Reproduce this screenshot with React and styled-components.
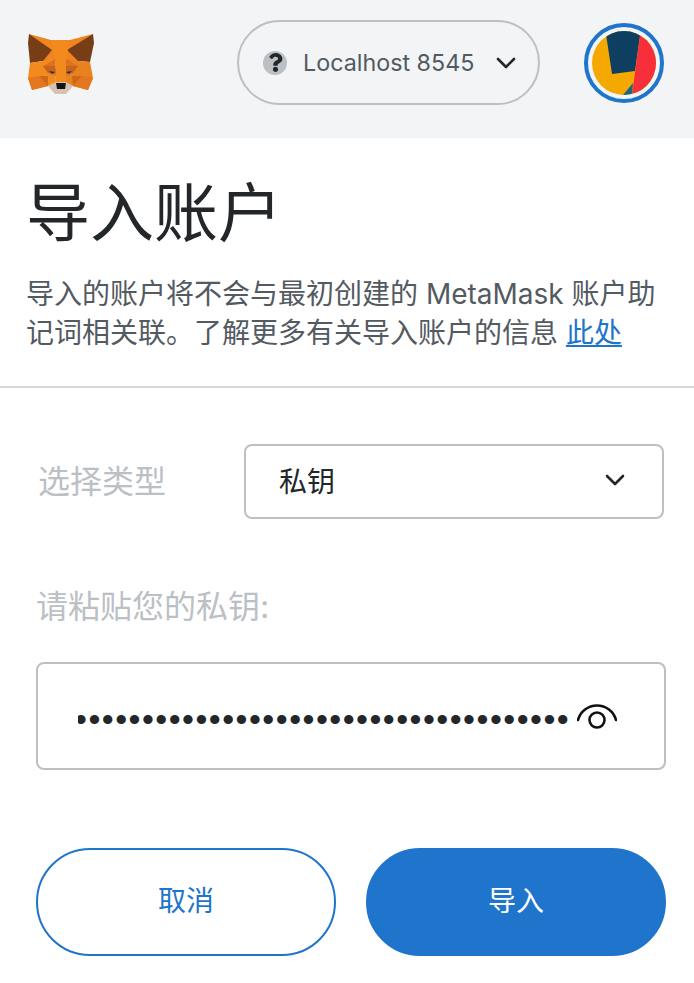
import React from 'react';
import styled, { createGlobalStyle } from 'styled-components';
import { FaQuestion } from 'react-icons/fa';

const Global = createGlobalStyle`
  html, body { margin: 0; padding: 0; background: #fff; }
  body { font-family: "Inter", "Noto Sans CJK SC", sans-serif; color: #24272a; }
  * { box-sizing: border-box; }
`;

const Page = styled.div`
  width: 694px;
  height: 983px;
  background: #fff;
  overflow: hidden;
`;

const Header = styled.header`
  height: 138px;
  background: #f2f4f6;
  display: flex;
  align-items: center;
  padding: 0 30px 13px 27px;
`;

const Pill = styled.div`
  width: 303px;
  height: 85px;
  margin: 0 44px 0 auto;
  border: 2px solid #bbc0c5;
  border-radius: 43px;
  display: flex;
  align-items: center;
  padding: 0 21px 0 24px;
`;

const HelpDot = styled.span`
  width: 24px;
  height: 24px;
  border-radius: 50%;
  background: #bbc0c5;
  display: flex;
  align-items: center;
  justify-content: center;
  color: #24272a;
  font-size: 19px;
  flex: none;
`;

const NetName = styled.span`
  margin-left: 16px;
  flex: 1;
  font-size: 23.3px;
  color: #535a61;
  white-space: nowrap;
`;

const AvatarRing = styled.div`
  width: 80px;
  height: 80px;
  border: 4px solid #1f74cb;
  border-radius: 50%;
  padding: 4px;
`;

const Intro = styled.section`
  padding: 0 26px;
  height: 250px;
  border-bottom: 2px solid #d6d9dc;
`;

const Title = styled.h1`
  margin: 0;
  padding-top: 34px;
  font-size: 64px;
  line-height: 82px;
  font-weight: 400;
  color: #24272a;
`;

const Desc = styled.p`
  margin: 21px 0 0;
  font-size: 28px;
  line-height: 39px;
  color: #535a61;
`;

const Link = styled.a`
  color: #1f74cb;
  text-decoration: underline;
`;

const Form = styled.section`
  padding: 0 28px 0 36px;
`;

const TypeRow = styled.div`
  display: flex;
  align-items: center;
  justify-content: space-between;
  padding: 56px 2px 0 2px;
`;

const Label = styled.label`
  font-size: 32px;
  line-height: 44px;
  color: #bbc0c5;
`;

const SelectBox = styled.div`
  width: 420px;
  height: 75px;
  border: 2px solid #bbc0c5;
  border-radius: 8px;
  display: flex;
  align-items: center;
  justify-content: space-between;
  padding: 0 36px 4px 33px;
  font-size: 28px;
  color: #24272a;
`;

const KeyLabel = styled(Label)`
  display: block;
  margin-top: 66px;
`;

const KeyField = styled.div`
  margin-top: 33px;
  width: 630px;
  height: 108px;
  border: 2px solid #bbc0c5;
  border-radius: 8px;
  display: flex;
  align-items: center;
  padding: 0 46px 0 40px;
`;

const KeyDots = styled.span`
  flex: none;
  width: 492px;
  margin: 6px 7px 0 0;
  overflow: hidden;
  white-space: nowrap;
  font-family: "Liberation Sans", sans-serif;
  font-size: 34px;
  line-height: 40px;
  letter-spacing: 1.48px;
  text-indent: -3px;
  color: #24272a;
`;

const Actions = styled.div`
  margin-top: 78px;
  width: 630px;
  display: flex;
  gap: 30px;
`;

const Button = styled.button`
  flex: 1;
  height: 108px;
  padding: 0 0 6px;
  border-radius: 54px;
  border: 2px solid #1f74cb;
  background: ${p => (p.$primary ? '#1f74cb' : '#fff')};
  color: ${p => (p.$primary ? '#fff' : '#1f74cb')};
  font: inherit;
  font-size: 28px;
`;

const Chevron = ({ size = 22 }) => (
  <svg width={size} height={size} viewBox="0 0 22 22" fill="none" stroke="#24272a" strokeWidth="2.6" strokeLinecap="round" strokeLinejoin="round">
    <path d="M3 7l8 8 8-8" />
  </svg>
);

const Fox = () => (
  <svg width="68" height="62" viewBox="27 31 68 62">
    <polygon points="29,33 51,39 70,39 93,33 78,60 43,60" fill="#f0851f" />
    <polygon points="29,33 52,49 43,60 30,62 28,42" fill="#763d16" />
    <polygon points="93,33 67,49 78,60 90,61 94,42" fill="#763d16" />
    <polygon points="51,39 70,39 66,58 66,82 56,82 55,58" fill="#f28a1e" />
    <polygon points="30,62 43,60 55,58 56,82 48,85 32,89 28,77" fill="#f28a1e" />
    <polygon points="90,61 78,60 66,58 66,82 73,85 88,89 93,77" fill="#e8821e" />
    <polygon points="43,65 55,58 56,75 48,72" fill="#dd7320" />
    <polygon points="78,65 66,58 66,75 73,72" fill="#dd7320" />
    <polygon points="43,65 55,65 56,72 48,72" fill="#c9621c" />
    <polygon points="78,65 66,65 66,72 73,72" fill="#c9621c" />
    <polygon points="28,77 39,75 48,85 32,89" fill="#e4761f" />
    <polygon points="93,77 82,75 73,85 88,89" fill="#e4761f" />
    <polygon points="39,75 48,75 48,85" fill="#cd6a1a" />
    <polygon points="82,75 72,75 73,85" fill="#cd6a1a" />
    <polygon points="48,85 56,81 66,81 73,85 66,93 55,93" fill="#d7c1b3" />
    <polygon points="56,82 66,82 65,88 57,88" fill="#161616" />
    <polygon points="49,70 55,71 52,73" fill="#233447" />
    <polygon points="72,70 66,71 69,73" fill="#233447" />
  </svg>
);

const Avatar = () => (
  <svg width="64" height="64" viewBox="0 0 64 64">
    <defs><clipPath id="av"><circle cx="32" cy="32" r="32" /></clipPath></defs>
    <g clipPath="url(#av)">
      <rect width="64" height="64" fill="#f5a800" />
      <polygon points="14,3 20,43 43,40 48,5 48,-2 14,-2" fill="#0e3f60" />
      <polygon points="48,5 40,64 66,66 66,0 48,0" fill="#f62f3a" />
      <polygon points="31,64 41,52 40,64" fill="#18697f" />
    </g>
  </svg>
);

const Eye = () => (
  <svg width="40" height="28" viewBox="0 0 40 28" fill="none" stroke="#111" strokeWidth="2.6" strokeLinecap="round">
    <path d="M1 18A19.7 19.7 0 0 1 39 18" />
    <circle cx="20" cy="18" r="7.5" />
  </svg>
);

export default function App() {
  return (
    <Page>
      <Global />
      <Header>
        <Fox />
        <Pill>
          <HelpDot><FaQuestion /></HelpDot>
          <NetName>Localhost 8545</NetName>
          <Chevron />
        </Pill>
        <AvatarRing><Avatar /></AvatarRing>
      </Header>
      <Intro>
        <Title>导入账户</Title>
        <Desc>
          导入的账户将不会与最初创建的 MetaMask 账户助记词相关联。了解更多有关导入账户的信息 <Link>此处</Link>
        </Desc>
      </Intro>
      <Form>
        <TypeRow>
          <Label>选择类型</Label>
          <SelectBox>私钥<Chevron /></SelectBox>
        </TypeRow>
        <KeyLabel>请粘贴您的私钥:</KeyLabel>
        <KeyField>
          <KeyDots>{'•'.repeat(37)}</KeyDots>
          <Eye />
        </KeyField>
        <Actions>
          <Button>取消</Button>
          <Button $primary>导入</Button>
        </Actions>
      </Form>
    </Page>
  );
}
